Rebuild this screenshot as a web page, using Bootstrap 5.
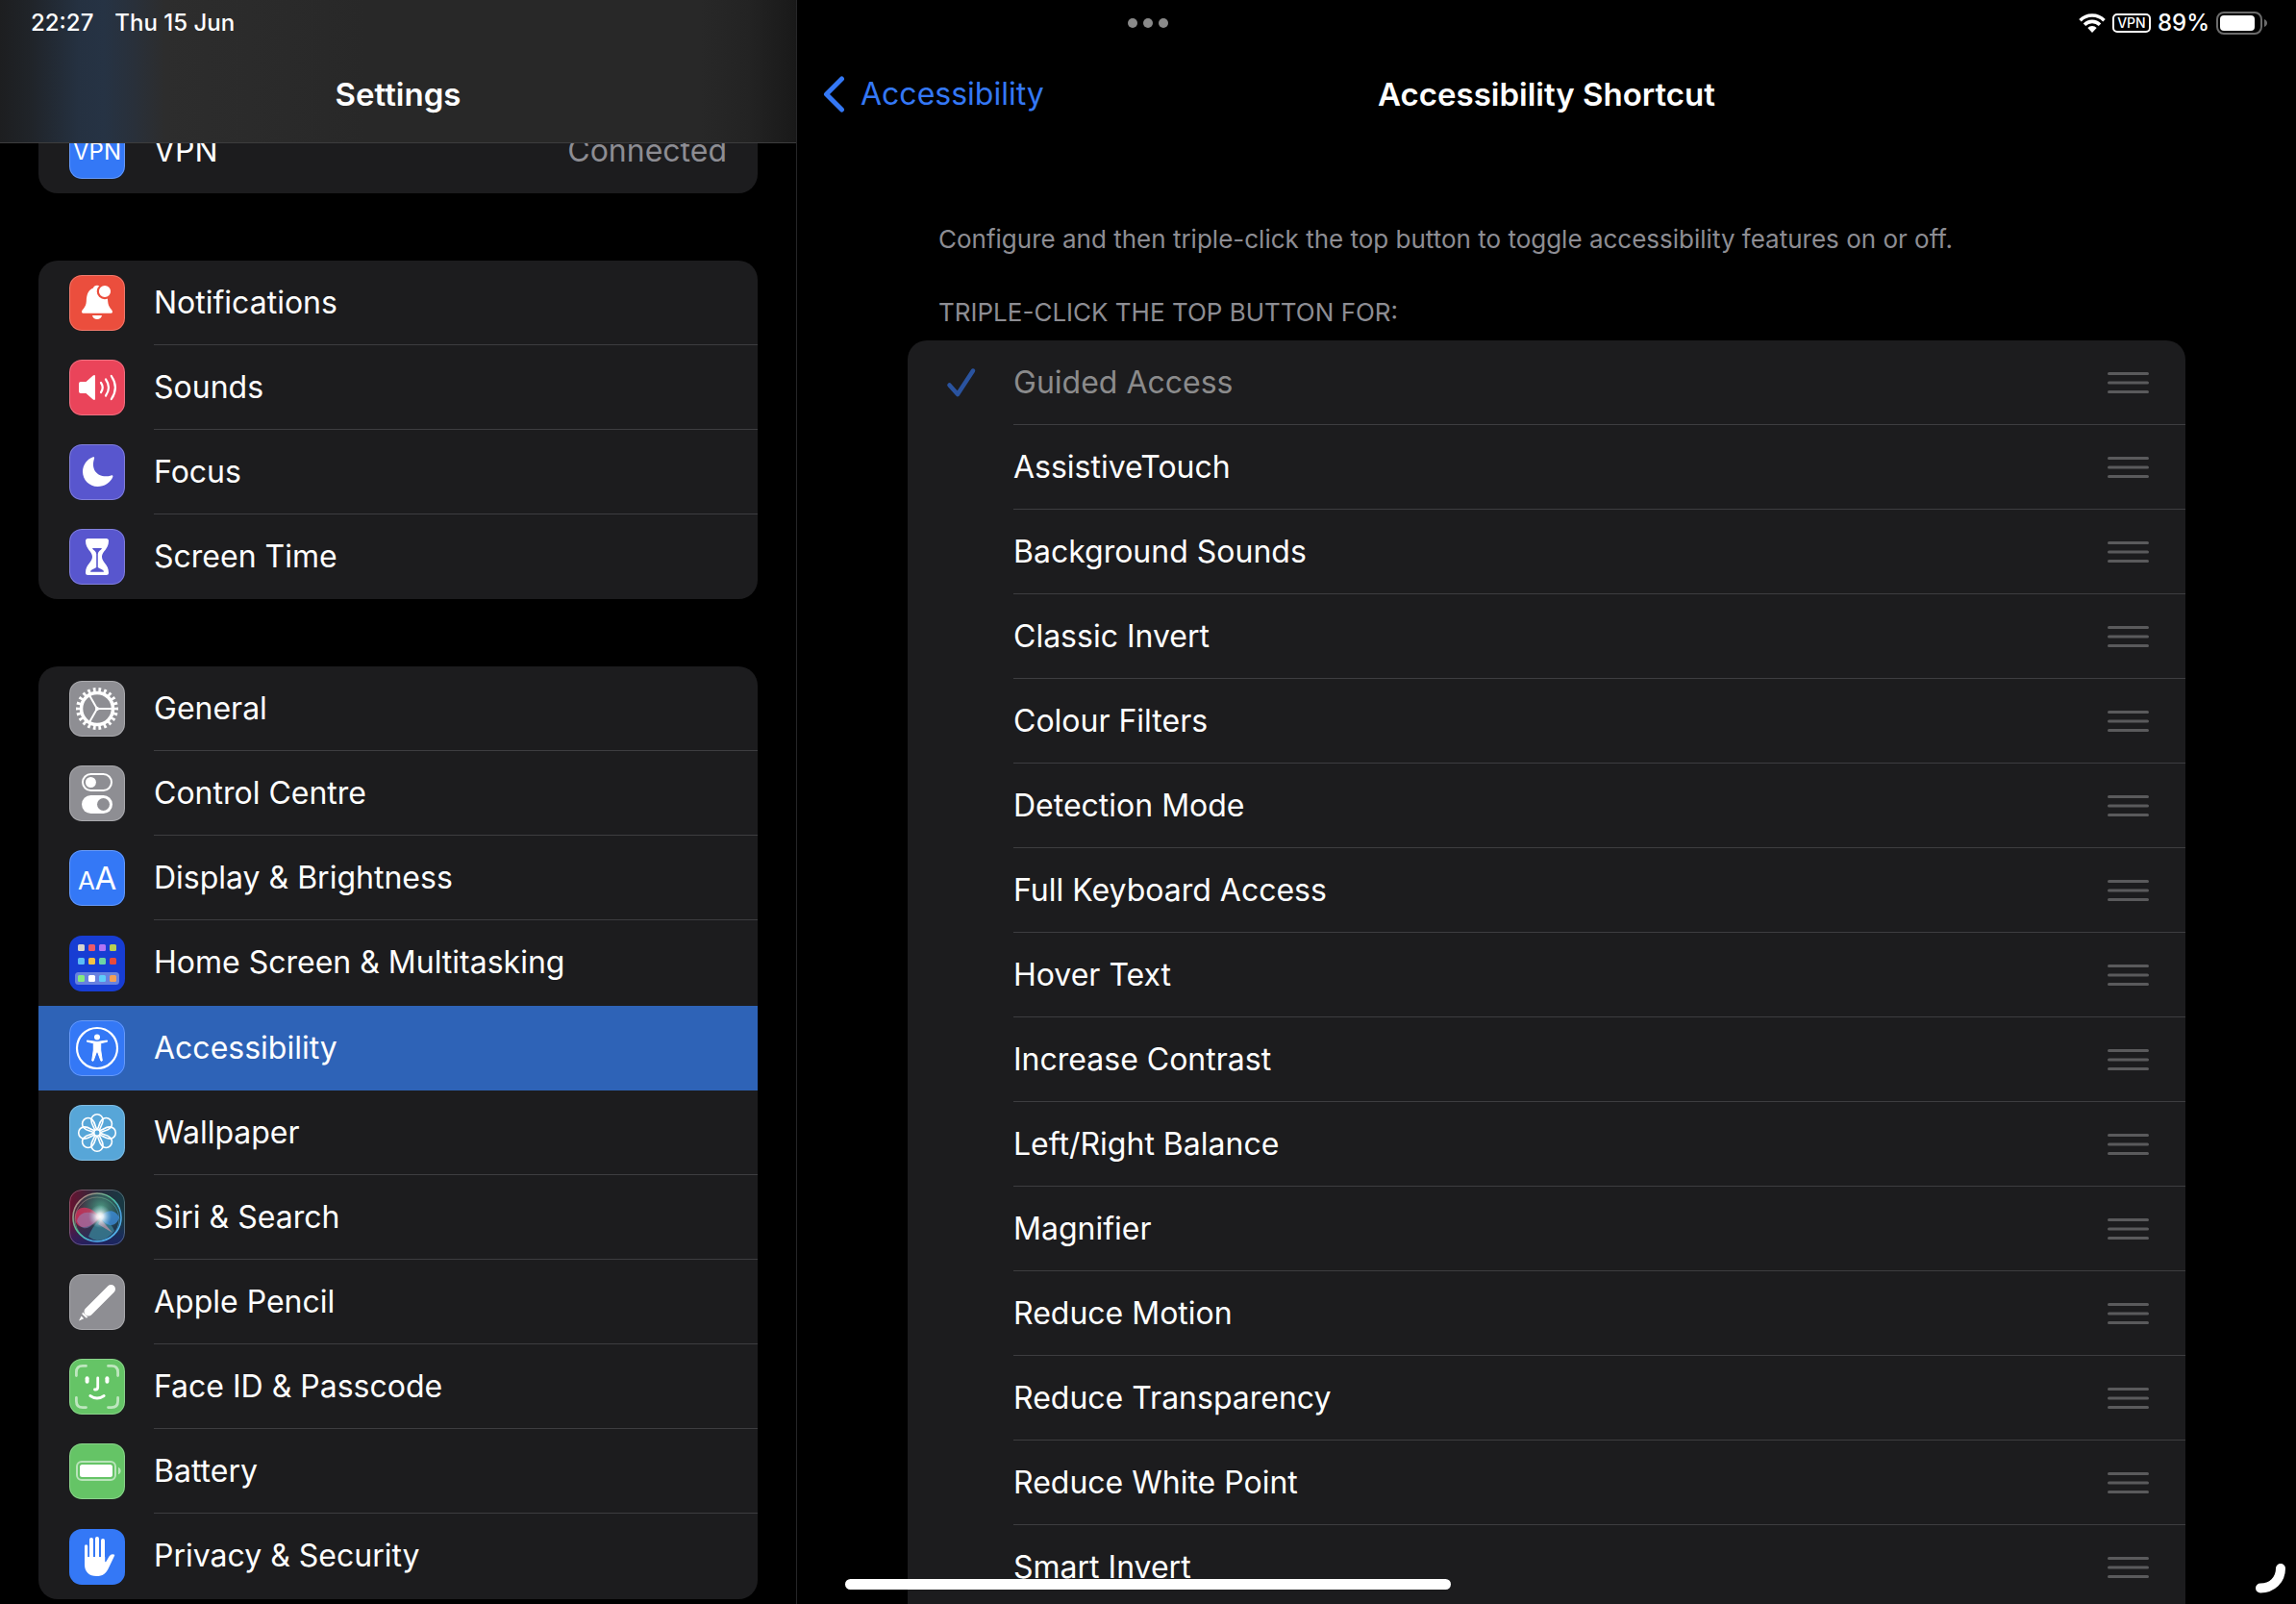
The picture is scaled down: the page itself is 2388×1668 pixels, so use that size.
<!DOCTYPE html>
<html lang="en-GB" data-bs-theme="dark">
<head>
<meta charset="utf-8">
<meta name="viewport" content="width=device-width, initial-scale=1">
<title>Settings – Accessibility Shortcut</title>
<link href="https://cdn.jsdelivr.net/npm/bootstrap@5.3.0/dist/css/bootstrap.min.css" rel="stylesheet">
<style>
  :root { --panel: #1c1c1e; --line: #3d3d40; --muted: #8d8d93; --tint: #3478f6; --pick: #2e63b7; }
  body { background: #000; color: #fff; font-family: Inter, "Liberation Sans", sans-serif; font-size: 32px; line-height: 40px; }
  .split { display: grid; grid-template-columns: minmax(0, 829fr) minmax(0, 1559fr); height: 100vh; }
  .side { border-right: 1px solid #262628; }
  .side-head { height: 149px; padding-top: 78px; border-bottom: 1px solid #3c3c3d; z-index: 2;
    background: linear-gradient(90deg, #1d1e20 0, #202429 32px, #253141 82px, #263344 108px, #29303a 140px, #2d2d2d 172px, #2b2b2b 260px, #282828 380px, #282828 88%, #232323 94%, #191919 100%); }
  .side-list { padding: 113px 40px 0; gap: 70px; }
  .bar-title { font-size: 33px; line-height: 40px; font-weight: 600; margin: 0; }
  .status { height: 48px; padding: 0 30px 0 32px; font-size: 24px; line-height: 32px; font-weight: 500; z-index: 3; }
  .status svg { display: block; }
  .status-icons { gap: 7px; }
  .status-time { gap: 22px; }
  .vpn-tag { border: 2px solid #fff; border-radius: 5px; font-size: 14px; line-height: 16px; font-weight: 500; width: 40px; text-align: center; }
  .dots { gap: 6px; height: 48px; left: 50%; transform: translateX(-50%); }
  .dots span { width: 10px; height: 10px; border-radius: 50%; background: #8a8a8a; }
  .panel { background: var(--panel); border-radius: 20px; overflow: hidden; }
  .panel .list-group-item { border: 0; color: #fff; background: transparent; }
  .side .list-group-item { padding: 0 0 0 32px; gap: 30px; }
  .side .list-group-item.tall .cell { height: 89px; }
  .cell { height: 88px; border-bottom: 1px solid var(--line); padding-right: 32px; }
  .list-group-item:last-child > .cell, .no-line > .cell { border-bottom-color: transparent; }
  .side .list-group-item.picked { background: var(--pick); }
  .tile { width: 58px; height: 58px; border-radius: 13px; overflow: hidden; flex: none; position: relative; }
  .tile::after { content: ""; position: absolute; inset: 0; border-radius: 13px; border: 1px solid rgba(255,255,255,.25); }
  .tile.flat::after { border: 0; }
  .tile svg { display: block; width: 58px; height: 58px; }
  .muted { color: var(--muted); }
  .main-head { height: 149px; padding-top: 78px; }
  .back { left: 26px; color: var(--tint); gap: 16px; }
  .content { padding: 0 115px; }
  .hint { font-size: 26px; line-height: 32px; color: var(--muted); padding: 0 32px; margin: 0; }
  .hint-top { margin-top: 84px; }
  .hint-head { margin-top: 44px; margin-bottom: 13px; font-weight: 400; }
  .main .panel { padding-bottom: 40px; }
  .main .list-group-item { padding: 0 0 0 40px; gap: 38px; }
  .tick { appearance: none; width: 32px; height: 32px; margin: 0; flex: none; background: center / 32px 32px no-repeat; }
  .tick:checked { background-image: url("data:image/svg+xml,%3Csvg xmlns='http://www.w3.org/2000/svg' viewBox='0 0 32 32'%3E%3Cpath d='M3.500 18.500 12 28 28 3.500' fill='none' stroke='%233478f6' stroke-width='4.500' stroke-linecap='round' stroke-linejoin='round'/%3E%3C/svg%3E"); }
  .tick:disabled { opacity: .6; }
  .tick:disabled + .cell label { color: #8b8b8c; }
  .main .cell { padding-right: 38px; }
  .grip { border: 0; background: none; padding: 0; width: 43px; height: 24px; }
  .grip svg { display: block; }
  .home-bar { left: 50px; bottom: 15px; width: 630px; height: 11px; border-radius: 6px; background: #fff; }
  .corner { right: 10px; bottom: 10px; }
</style>
<script src="https://cdn.jsdelivr.net/npm/bootstrap@5.3.0/dist/js/bootstrap.bundle.min.js"></script>
</head>
<body class="overflow-hidden">

<div class="status position-absolute top-0 start-0 end-0 d-flex align-items-center justify-content-between">
  <div class="status-time d-flex"><span>22:27</span><span>Thu 15 Jun</span></div>
  <div class="dots position-absolute d-flex align-items-center"><span></span><span></span><span></span></div>
  <div class="status-icons d-flex align-items-center">
    <svg width="28" height="20" viewBox="0 0 28 20" role="img" aria-label="Wi-Fi">
      <g fill="none" stroke="#fff" stroke-width="3.600"><path d="M1.500 7.200a17.700 17.700 0 0 1 25 0"/><path d="M6 11.700a11.300 11.300 0 0 1 16 0"/></g>
      <path d="M9.300 15a6.700 6.700 0 0 1 9.400 0L14 20z" fill="#fff"/>
    </svg>
    <span class="vpn-tag">VPN</span>
    <span>89%</span>
    <svg width="53" height="24" viewBox="0 0 53 24" role="img" aria-label="Battery">
      <rect x="1" y="1" width="46" height="22" rx="7" fill="none" stroke="#6b6b6b" stroke-width="2"/>
      <rect x="4" y="4" width="36" height="16" rx="4" fill="#fff"/>
      <path d="M50 8c4 1.500 4 6.500 0 8z" fill="#6b6b6b"/>
    </svg>
  </div>
</div>

<div class="split">
  <nav class="side position-relative overflow-hidden" aria-label="Settings">
    <header class="side-head position-absolute top-0 start-0 end-0 d-flex align-items-start justify-content-center">
      <h1 class="bar-title">Settings</h1>
    </header>
    <div class="side-list d-flex flex-column">

      <div class="panel list-group">
        <a href="#" class="list-group-item d-flex align-items-center">
          <span class="tile"><svg viewBox="0 0 58 58"><rect width="58" height="58" fill="#3478f6"/><text x="29" y="38" text-anchor="middle" font-size="24" font-weight="400" fill="#fff">VPN</text></svg></span>
          <span class="cell flex-grow-1 d-flex align-items-center justify-content-between"><span>VPN</span><span class="muted">Connected</span></span>
        </a>
      </div>

      <div class="panel list-group">
        <a href="#" class="list-group-item d-flex align-items-center">
          <span class="tile"><svg viewBox="0 0 58 58"><rect width="58" height="58" fill="#eb4e3d"/>
            <path fill="#fff" d="M13 38.500C12.500 36.500 17.500 34 17.800 27.500 18 19 20.500 15.500 25 13.500 25.500 11.500 27 10.700 29 10.700S32.500 11.500 33 13.500C37.500 15.500 40 19 40.200 27.500 40.500 34 45.500 36.500 45 38.500Q44.600 39.800 43.500 39.800H14.500Q13.400 39.800 13 38.500ZM24 42H34C33.500 44.700 31.500 46 29 46S24.500 44.700 24 42Z"/>
            <circle cx="37" cy="17" r="7.200" fill="#fff" stroke="#eb4e3d" stroke-width="2.200"/></svg></span>
          <span class="cell flex-grow-1 d-flex align-items-center">Notifications</span>
        </a>
        <a href="#" class="list-group-item d-flex align-items-center">
          <span class="tile"><svg viewBox="0 0 58 58"><rect width="58" height="58" fill="#ea445a"/>
            <path fill="#fff" d="M12 23H17.500L24.500 16.800Q27 15 27 17.500V40.500Q27 43 24.500 41.200L17.500 35H12Q10 35 10 33V25Q10 23 12 23Z"/>
            <g fill="none" stroke="#fff" stroke-width="2.200" stroke-linecap="round"><path d="M33 24Q36.500 29 33 34M38 20.500Q44 29 38 37.500M43.800 17Q52 29 43.800 41"/></g></svg></span>
          <span class="cell flex-grow-1 d-flex align-items-center">Sounds</span>
        </a>
        <a href="#" class="list-group-item d-flex align-items-center">
          <span class="tile"><svg viewBox="0 0 58 58"><rect width="58" height="58" fill="#5856ce"/>
            <path fill="#fff" d="M24.800 13.300C18.500 15.500 14 21.500 14 28.500 14 37 21 44 29.500 44 36.500 44 42.800 40 45.300 34 45.800 32.600 44.800 32 43.600 32.400 31 36 22 27.500 25.900 15.200 26.500 13.500 26 12.900 24.800 13.300Z"/></svg></span>
          <span class="cell flex-grow-1 d-flex align-items-center">Focus</span>
        </a>
        <a href="#" class="list-group-item d-flex align-items-center">
          <span class="tile"><svg viewBox="0 0 58 58"><rect width="58" height="58" fill="#5856ce"/>
            <path fill="#fff" d="M19.500 10H38.500Q41 10 41 12.500C41 21 34 23.500 34 29S41 37 41 45.500Q41 48 38.500 48H19.500Q17 48 17 45.500C17 37 24 34.500 24 29S17 21 17 12.500Q17 10 19.500 10Z"/>
            <path fill="#5856ce" d="M24 20H34Q33.500 21.500 31.500 22.800 30 24 29.800 26V40Q31 41 34 42.300 36 43.200 36 44.800H22Q22 43.200 24 42.300 27 41 28.200 40V26Q28 24 26.500 22.800 24.500 21.500 24 20Z"/></svg></span>
          <span class="cell flex-grow-1 d-flex align-items-center">Screen Time</span>
        </a>
      </div>

      <div class="panel list-group">
        <a href="#" class="list-group-item d-flex align-items-center">
          <span class="tile"><svg viewBox="0 0 58 58"><rect width="58" height="58" fill="#8e8e93"/>
            <g fill="none" stroke="#fff"><circle cx="29" cy="29" r="16.500" stroke-width="3.600"/>
            <circle cx="29" cy="29" r="19.500" stroke-width="5" pathLength="220" stroke-dasharray="4.800 5.200" stroke-dashoffset="2.400"/>
            <path stroke-width="2" d="M29 29H45M29 29 21 15.100M29 29 21 42.900"/></g><circle cx="29" cy="29" r="2" fill="#fff"/></svg></span>
          <span class="cell flex-grow-1 d-flex align-items-center">General</span>
        </a>
        <a href="#" class="list-group-item d-flex align-items-center">
          <span class="tile"><svg viewBox="0 0 58 58"><rect width="58" height="58" fill="#8e8e93"/>
            <rect x="14" y="9" width="30" height="17" rx="8.500" fill="none" stroke="#fff" stroke-width="2"/><circle cx="22.400" cy="17.500" r="5.500" fill="#fff"/>
            <rect x="13" y="31" width="32" height="19" rx="9.500" fill="#fff"/><circle cx="35.500" cy="40.500" r="6.500" fill="#8e8e93"/></svg></span>
          <span class="cell flex-grow-1 d-flex align-items-center">Control Centre</span>
        </a>
        <a href="#" class="list-group-item d-flex align-items-center">
          <span class="tile"><svg viewBox="0 0 58 58"><rect width="58" height="58" fill="#3478f6"/>
            <text x="18" y="41" text-anchor="middle" font-size="26" font-weight="400" fill="#fff">A</text><text x="38" y="41" text-anchor="middle" font-size="33" font-weight="400" fill="#fff">A</text></svg></span>
          <span class="cell flex-grow-1 d-flex align-items-center">Display &amp; Brightness</span>
        </a>
        <a href="#" class="list-group-item tall no-line d-flex align-items-center">
          <span class="tile flat"><svg viewBox="0 0 58 58"><rect width="58" height="58" fill="#173dd3"/>
            <rect x="6" y="38" width="46" height="13" rx="3.500" fill="#6781e0"/>
            <rect x="9" y="9" width="7" height="7" rx="1.500" fill="#d6d4cf"/><rect x="20" y="9" width="7" height="7" rx="1.500" fill="#ec5a68"/><rect x="31" y="9" width="7" height="7" rx="1.500" fill="#b074f5"/><rect x="42" y="9" width="7" height="7" rx="1.500" fill="#b9cf51"/>
            <rect x="9" y="23" width="7" height="7" rx="1.500" fill="#5cbcf6"/><rect x="20" y="23" width="7" height="7" rx="1.500" fill="#f4c142"/><rect x="31" y="23" width="7" height="7" rx="1.500" fill="#6dd3a4"/><rect x="42" y="23" width="7" height="7" rx="1.500" fill="#e64a3b"/>
            <rect x="9" y="41" width="7" height="7" rx="1.500" fill="#84ea80"/><rect x="20" y="41" width="7" height="7" rx="1.500" fill="#fff"/><rect x="31" y="41" width="7" height="7" rx="1.500" fill="#5ecbfa"/><rect x="42" y="41" width="7" height="7" rx="1.500" fill="#f2a057"/></svg></span>
          <span class="cell flex-grow-1 d-flex align-items-center">Home Screen &amp; Multitasking</span>
        </a>
        <a href="#" class="list-group-item picked no-line d-flex align-items-center" aria-current="page">
          <span class="tile"><svg viewBox="0 0 58 58"><rect width="58" height="58" fill="#3478f6"/>
            <circle cx="29" cy="29" r="21" fill="none" stroke="#fff" stroke-width="2.200"/><circle cx="29" cy="17.600" r="3" fill="#fff"/>
            <path fill="#fff" stroke="#fff" stroke-linejoin="round" stroke-width="1" d="M18.500 21 29 22.400 39.500 21V22.200L32.700 23.800V31L34.300 42 33 42.300 29.600 33H28.400L25 42.300 23.700 42 25.300 31V23.800L18.500 22.200Z"/></svg></span>
          <span class="cell flex-grow-1 d-flex align-items-center">Accessibility</span>
        </a>
        <a href="#" class="list-group-item d-flex align-items-center">
          <span class="tile"><svg viewBox="0 0 58 58"><defs><path id="petal" d="M27.500 29.500C27.500 24 22.900 21.500 22.900 15.800A6.100 6.100 0 0 1 35.100 15.800C35.100 21.500 30.500 24 30.500 29.500"/></defs><rect width="58" height="58" fill="#57a6d8"/>
            <g fill="none" stroke="#fff" stroke-width="1.600"><use href="#petal"/><use href="#petal" transform="rotate(45 29 29)"/><use href="#petal" transform="rotate(90 29 29)"/><use href="#petal" transform="rotate(135 29 29)"/><use href="#petal" transform="rotate(180 29 29)"/><use href="#petal" transform="rotate(225 29 29)"/><use href="#petal" transform="rotate(270 29 29)"/><use href="#petal" transform="rotate(315 29 29)"/></g><circle cx="29" cy="29" r="3.200" fill="#57a6d8" stroke="#fff" stroke-width="1.500"/></svg></span>
          <span class="cell flex-grow-1 d-flex align-items-center">Wallpaper</span>
        </a>
        <a href="#" class="list-group-item d-flex align-items-center">
          <span class="tile"><svg viewBox="0 0 58 58">
            <defs>
              <linearGradient id="sBase" x1="0" y1="0" x2="1" y2="0"><stop offset="0" stop-color="#6a1230"/><stop offset=".5" stop-color="#2a2a3c"/><stop offset="1" stop-color="#173a44"/></linearGradient>
              <linearGradient id="sLow" x1="0" y1="0" x2="0" y2="1"><stop offset=".55" stop-color="#1b2a7a" stop-opacity="0"/><stop offset="1" stop-color="#1b1f6a" stop-opacity=".8"/></linearGradient>
              <linearGradient id="sRing" x1="0" y1="0" x2="1" y2="1"><stop offset="0" stop-color="#d9707c"/><stop offset=".45" stop-color="#4fc79a"/><stop offset=".7" stop-color="#4a9fe0"/><stop offset="1" stop-color="#5ac3f2"/></linearGradient>
              <radialGradient id="sGreen" cx=".58" cy=".3" r=".5"><stop offset="0" stop-color="#4f9c84"/><stop offset="1" stop-color="#2c5a5c" stop-opacity=".2"/></radialGradient>
              <radialGradient id="sGlow"><stop offset="0" stop-color="#fff"/><stop offset=".28" stop-color="#fff" stop-opacity=".85"/><stop offset="1" stop-color="#9fd6e8" stop-opacity="0"/></radialGradient>
            </defs>
            <rect width="58" height="58" fill="url(#sBase)"/><rect width="58" height="58" fill="url(#sLow)"/>
            <circle cx="29" cy="29" r="25" fill="url(#sGreen)"/>
            <path d="M20 49Q24 38 33 30 44 34 47 43 40 53 29 53 24 52 20 49Z" fill="#3a7f94" opacity=".8"/>
            <path d="M32 29C24 17 8 14 6 28 5 41 20 44 32 29Z" fill="#dc3560" opacity=".75"/>
            <path d="M30 29C24 21 10 22 8 33 14 45 23 41 30 29Z" fill="#8f8bc6" opacity=".5"/>
            <path d="M32 29C38 20 48 20 52 29 49 40 38 39 32 29Z" fill="#3d8fe0" opacity=".75"/>
            <path d="M33 31 45 45 30 36Z" fill="#c994a8" opacity=".7"/>
            <circle cx="29" cy="29" r="25" fill="none" stroke="url(#sRing)" stroke-width="1.600"/><circle cx="29" cy="31" r="23" fill="none" stroke="url(#sRing)" stroke-width=".7" opacity=".8"/>
            <circle cx="32" cy="28" r="12" fill="url(#sGlow)"/></svg></span>
          <span class="cell flex-grow-1 d-flex align-items-center">Siri &amp; Search</span>
        </a>
        <a href="#" class="list-group-item d-flex align-items-center">
          <span class="tile"><svg viewBox="0 0 58 58"><rect width="58" height="58" fill="#8e8e93"/>
            <path d="M43.500 15.500 20 39" stroke="#fff" stroke-width="9" stroke-linecap="round"/><path d="M14 39.500 19.500 45 17.500 45.600 13.300 41.500Z" fill="#fff"/><path d="M12.600 43.500 15.200 46.200 10 48.500Z" fill="#fff"/></svg></span>
          <span class="cell flex-grow-1 d-flex align-items-center">Apple Pencil</span>
        </a>
        <a href="#" class="list-group-item d-flex align-items-center">
          <span class="tile"><svg viewBox="0 0 58 58"><rect width="58" height="58" fill="#65c466"/>
            <g fill="none" stroke="#fff" stroke-width="2.800" stroke-linecap="round"><path opacity=".58" d="M7.400 17.500V14Q7.400 7.400 14 7.400H17.500M40.500 7.400H44Q50.600 7.400 50.600 14V17.500M50.600 40.500V44Q50.600 50.600 44 50.600H40.500M17.500 50.600H14Q7.400 50.600 7.400 44V40.500"/>
            <path d="M29.700 20V29.500Q29.700 32 27.300 32H26.500M21.800 38.500Q29 43.500 36.200 38.500"/></g>
            <rect x="16.600" y="18.300" width="4" height="7.500" rx="2" fill="#fff"/><rect x="37.400" y="18.300" width="4" height="7.500" rx="2" fill="#fff"/></svg></span>
          <span class="cell flex-grow-1 d-flex align-items-center">Face ID &amp; Passcode</span>
        </a>
        <a href="#" class="list-group-item d-flex align-items-center">
          <span class="tile"><svg viewBox="0 0 58 58"><rect width="58" height="58" fill="#65c466"/>
            <rect x="8" y="19" width="40" height="19" rx="5" fill="none" stroke="#fff" stroke-width="2" opacity=".55"/><rect x="11" y="22" width="34" height="13" rx="2.500" fill="#fff"/><path d="M51 24.700C54.500 26 54.500 31 51 32.300Z" fill="#fff" opacity=".55"/></svg></span>
          <span class="cell flex-grow-1 d-flex align-items-center">Battery</span>
        </a>
        <a href="#" class="list-group-item tall d-flex align-items-center">
          <span class="tile flat"><svg viewBox="0 0 58 58"><rect width="58" height="58" fill="#3478f6"/>
            <g stroke="#fff" stroke-linecap="round"><path stroke-width="3.200" d="M17.600 17.800V36"/><path stroke-width="4" d="M23 11V32M29 10V32M35 12V32"/></g>
            <path fill="#fff" d="M16 29H37.200V34Q38 34.500 38.600 33.500L41.500 28.500Q44 25 47.200 26.800 47.500 27.300 46.500 29L41 40.500C38.500 46.500 34.500 49 28.500 49 20.500 49 16 44.500 16 37Z"/></svg></span>
          <span class="cell flex-grow-1 d-flex align-items-center">Privacy &amp; Security</span>
        </a>
      </div>
    </div>
  </nav>

  <main class="main position-relative overflow-hidden">
    <header class="main-head position-relative d-flex align-items-start justify-content-center">
      <a href="#" class="back position-absolute d-flex align-items-center text-decoration-none">
        <svg width="24" height="40" viewBox="0 0 24 40" aria-hidden="true"><path d="M20.500 4 4.500 20 20.500 36" fill="none" stroke="#3478f6" stroke-width="5" stroke-linecap="round" stroke-linejoin="round"/></svg>
        <span>Accessibility</span>
      </a>
      <h2 class="bar-title">Accessibility Shortcut</h2>
    </header>
    <div class="content">
      <p class="hint hint-top">Configure and then triple-click the top button to toggle accessibility features on or off.</p>
      <h3 class="hint hint-head text-uppercase">Triple-click the top button for:</h3>
      <ul class="panel list-group" id="shortcuts"></ul>
    </div>
    <div class="home-bar position-absolute"></div>
    <svg class="corner position-absolute" width="34" height="34" viewBox="0 0 34 34" aria-hidden="true"><path d="M7 27.500C19 27.500 28 19 28 7" fill="none" stroke="#fff" stroke-width="10" stroke-linecap="round"/></svg>
  </main>
</div>

<script>
  const features = ["Guided Access", "AssistiveTouch", "Background Sounds", "Classic Invert", "Colour Filters",
    "Detection Mode", "Full Keyboard Access", "Hover Text", "Increase Contrast", "Left/Right Balance", "Magnifier",
    "Reduce Motion", "Reduce Transparency", "Reduce White Point", "Smart Invert"];
  document.getElementById("shortcuts").innerHTML = features.map((name, i) => `
    <li class="list-group-item d-flex align-items-center">
      <input class="tick" type="checkbox" id="f${i}" ${i === 0 ? "checked disabled" : ""}>
      <div class="cell flex-grow-1 d-flex align-items-center justify-content-between">
        <label for="f${i}">${name}</label>
        <button class="grip" type="button" aria-label="Reorder ${name}">
          <svg width="43" height="24" viewBox="0 0 43 24"><path d="M1.500 2.500H41.500M1.500 12H41.500M1.500 21.500H41.500" stroke="#5a5a5c" stroke-width="3" stroke-linecap="round"/></svg>
        </button>
      </div>
    </li>`).join("");
</script>
</body>
</html>
